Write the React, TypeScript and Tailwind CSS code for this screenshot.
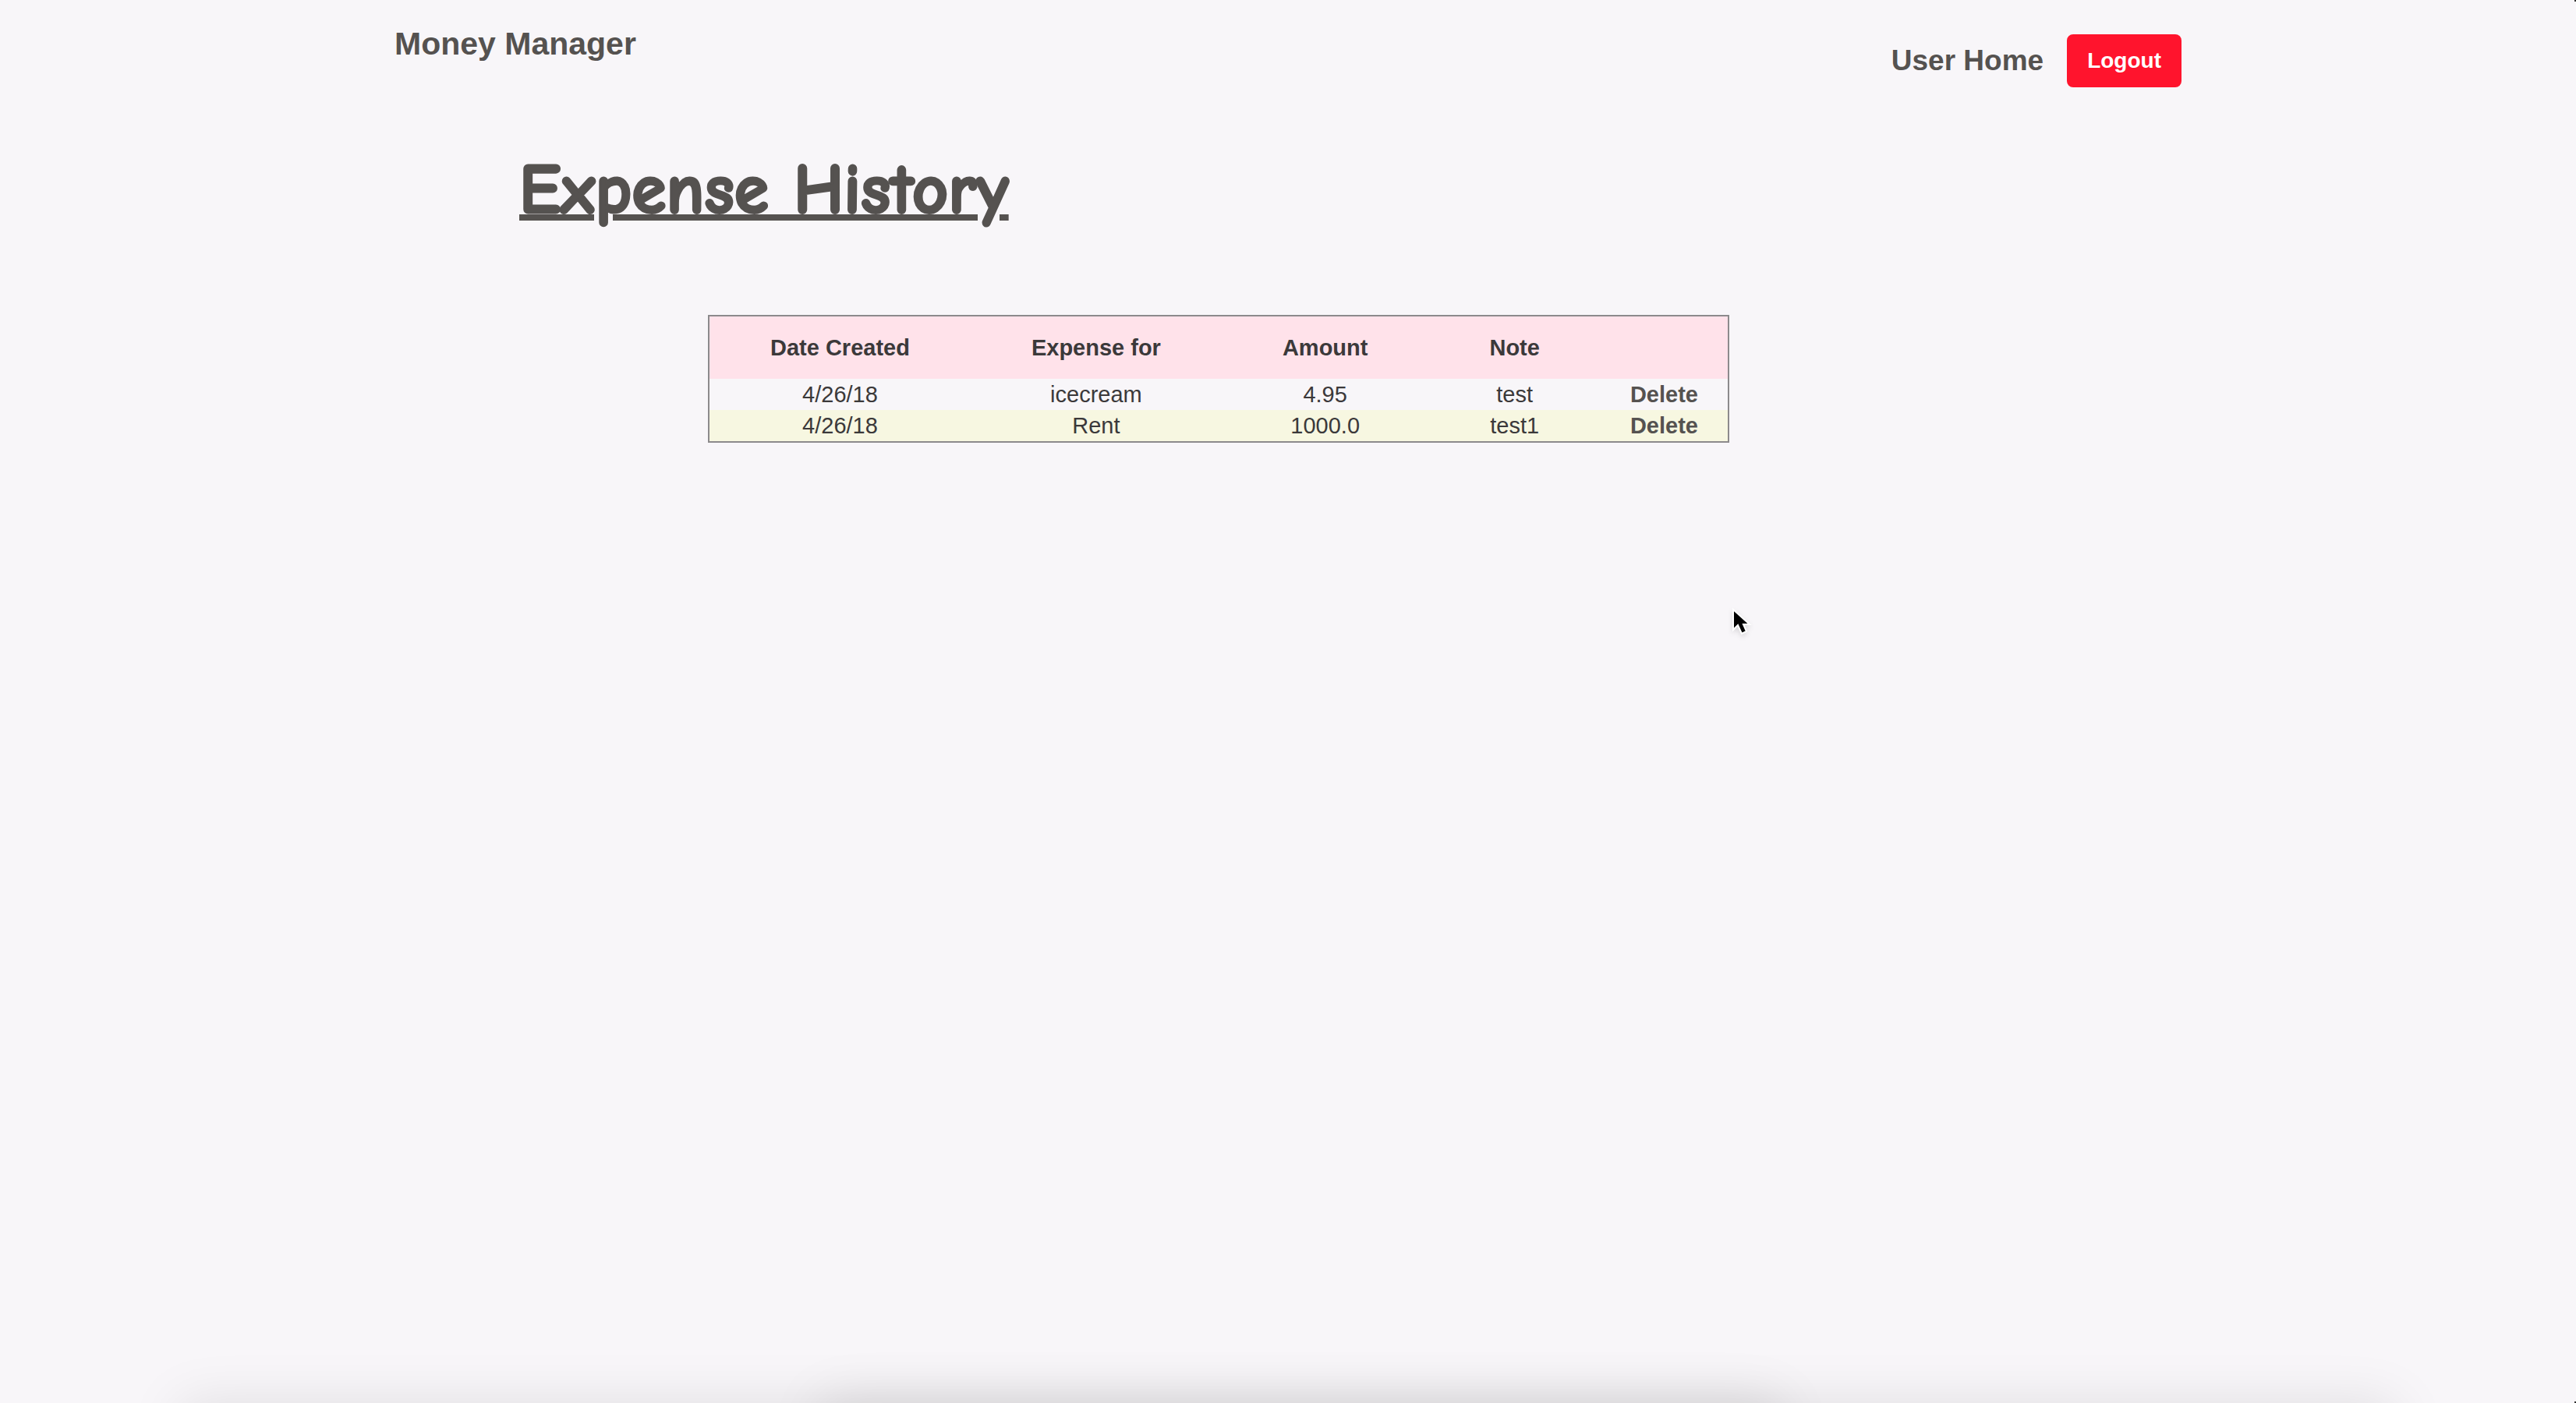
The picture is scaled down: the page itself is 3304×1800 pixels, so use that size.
type Expense = { date: string; purpose: string; amount: string; note: string };

const expenses: Expense[] = [
  { date: "4/26/18", purpose: "icecream", amount: "4.95", note: "test" },
  { date: "4/26/18", purpose: "Rent", amount: "1000.0", note: "test1" },
];

function Header() {
  return (
    <header className="flex items-start justify-between text-[#555250] font-bold">
      <a href="#" className="mt-8 text-[41px] leading-12">
        Money Manager
      </a>
      <nav className="mt-11 flex items-center gap-[30px]">
        <a href="#" className="text-[37px]">
          User Home
        </a>
        <button
          type="button"
          className="h-17 rounded-lg bg-[#ff142d] px-[26px] text-[28px] font-bold text-white"
        >
          Logout
        </button>
      </nav>
    </header>
  );
}

function ExpenseTable() {
  return (
    <table className="ml-[402px] mt-[104px] border-separate border-spacing-0 border-2 border-[#8c8a8c] text-center text-[29px] leading-10 text-[#3b393a]">
      <thead className="bg-[#ffe2ea]">
        <tr className="h-20">
          <th className="px-[78px]">Date Created</th>
          <th className="px-[78px]">Expense for</th>
          <th className="px-[78px]">Amount</th>
          <th className="px-[78px]">Note</th>
          <th aria-label="Actions" />
        </tr>
      </thead>
      <tbody>
        {expenses.map((e) => (
          <tr key={e.note} className="even:bg-[#f7f7e1]">
            <td>{e.date}</td>
            <td>{e.purpose}</td>
            <td>{e.amount}</td>
            <td>{e.note}</td>
            <td className="px-[38px]">
              <a href="#" className="font-bold text-[#555250]">
                Delete
              </a>
            </td>
          </tr>
        ))}
      </tbody>
    </table>
  );
}

function BottomShadow() {
  return (
    <div className="pointer-events-none absolute inset-x-0 bottom-0 h-28 overflow-hidden">
      <div className="absolute inset-x-[7%] top-full h-40 shadow-[0_0_70px_0_rgba(0,0,0,0.1)]" />
      <div className="absolute left-[32%] right-[31%] top-full h-40 shadow-[0_0_70px_4px_rgba(0,0,0,0.1)]" />
    </div>
  );
}

function Pointer() {
  return (
    <svg
      className="pointer-events-none absolute left-[2220px] top-[778px] h-10 w-8 drop-shadow-md"
      viewBox="0 0 32 40"
      aria-hidden="true"
    >
      <path
        d="M3 4v26l6-6 5 11 6-3-4-9h8z"
        fill="#000"
        stroke="#fff"
        strokeWidth="2"
      />
    </svg>
  );
}

export default function App() {
  return (
    <div className="relative min-h-screen overflow-hidden bg-[#f8f6f9] font-['Liberation_Sans',Arial,sans-serif]">
      <div className="mx-auto max-w-[2292px]">
        <Header />
        <main>
          <h1 className="ml-40 mt-[76px] font-['Comic_Sans_MS','Comic_Neue',Lato,sans-serif] text-[90px] leading-28 font-bold text-[#555250] underline decoration-8 underline-offset-2 [-webkit-text-stroke:3px_#555250]">
            Expense History
          </h1>
          <ExpenseTable />
        </main>
      </div>
      <BottomShadow />
      <Pointer />
      <span className="absolute right-0 top-0 size-0.5 bg-[#333]" />
      <span className="absolute bottom-0 right-0 size-0.5 bg-[#333]" />
    </div>
  );
}
